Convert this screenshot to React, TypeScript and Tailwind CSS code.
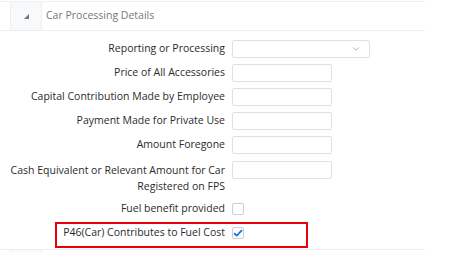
import { ChevronDown } from 'lucide-react';

const font = { fontFamily: '"Open Sans", "Noto Sans", sans-serif' };

function TextRow({ label }: { label: string }) {
  return (
    <div className="flex h-6 items-center">
      <div className="w-[226px] pr-px text-right text-[10.5px] text-[#2b2b2b]">{label}</div>
      <div className="ml-[6px] h-[18px] w-[100px] rounded-[2px] border border-[#dde1e6] bg-white" />
    </div>
  );
}

function CheckRow({ label, checked }: { label: string; checked?: boolean }) {
  return (
    <div className="flex h-6 items-center">
      <div className="w-[226px] pr-px text-right text-[10.5px] text-[#2b2b2b]">{label}</div>
      <div className="ml-[6px] flex h-[12px] w-[12px] items-center justify-center rounded-[2px] border border-[#c9ced4] bg-white">
        {checked && (
          <svg width="10" height="8" viewBox="0 0 10 8">
            <path d="M1 4.2 L3.8 6.6 L9 1.2" fill="none" stroke="#1a73d9" strokeWidth="1.8" />
          </svg>
        )}
      </div>
    </div>
  );
}

export default function App() {
  return (
    <div className="relative h-[266px] w-[458px] bg-white pt-px" style={font}>
      {/* Section header */}
      <div className="w-[425px] border-t border-[#f0f0f0]">
        <div className="flex h-[29px] items-center border-b border-[#eeeeee]">
          <div className="ml-[10px] flex h-full w-[32px] items-center justify-center border-x border-[#eceef1] bg-[#f8f9fa]">
            <svg width="5" height="5" viewBox="0 0 5 5">
              <polygon points="5,0 5,5 0,5" fill="#777" />
            </svg>
          </div>
          <span className="ml-[4px] text-[10.5px] text-[#777]">Car Processing Details</span>
        </div>

        {/* Form */}
        <div className="pt-[6px]">
          <div className="flex h-6 items-center">
            <div className="w-[226px] pr-px text-right text-[10.5px] text-[#2b2b2b]">Reporting or Processing</div>
            <div className="ml-[6px] flex h-[18px] w-[138px] items-center justify-end rounded-[2px] border border-[#dde1e6] bg-white pr-[8px]">
              <ChevronDown size={10} strokeWidth={1.5} className="text-[#888]" />
            </div>
          </div>
          <TextRow label="Price of All Accessories" />
          <TextRow label="Capital Contribution Made by Employee" />
          <TextRow label="Payment Made for Private Use" />
          <TextRow label="Amount Foregone" />
          <div className="flex h-[40px] items-start">
            <div className="w-[226px] pr-px pt-[5px] text-right text-[10.5px] leading-4 text-[#2b2b2b]">
              Cash Equivalent or Relevant Amount for Car
              <br />
              Registered on FPS
            </div>
            <div className="ml-[6px] mt-[4px] h-[18px] w-[100px] rounded-[2px] border border-[#dde1e6] bg-white" />
          </div>
          <CheckRow label="Fuel benefit provided" />
          <CheckRow label="P46(Car) Contributes to Fuel Cost" checked />
        </div>

        <div className="mt-[4px] flex border-t border-[#eeeeee]">
          <div className="ml-[10px] h-[2px] w-[32px] border-x border-[#eceef1] bg-[#f8f9fa]" />
        </div>
      </div>

      {/* Annotation box */}
      <div className="pointer-events-none absolute left-[55px] top-[222px] h-[26px] w-[253px] border-2 border-[#e8000b]" />
    </div>
  );
}
